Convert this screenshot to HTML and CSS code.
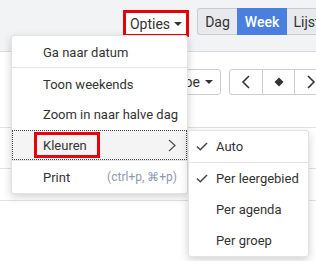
FILE: index.html
```html
<!DOCTYPE html>
<html>
<head>
<meta charset="utf-8">
<link rel="stylesheet" href="styles.css">
</head>
<body>
<div class="page">
  <div class="header">
    <button class="opties hl">Opties <span class="caret"></span></button>
    <div class="views">
      <span class="view">Dag</span>
      <span class="view active">Week</span>
      <span class="view">Lijst</span>
    </div>
  </div>
  <div class="toolbar">
    <button class="select">Voeg toe <span class="caret"></span></button>
    <div class="nav">
      <span class="navbtn"><svg width="10" height="14" viewBox="0 0 10 14"><path d="M8 1 L2 7 L8 13" fill="none" stroke="#333" stroke-width="1.6"/></svg></span>
      <span class="navbtn"><svg width="10" height="10" viewBox="0 0 10 10"><path d="M5 0.5 L9.5 5 L5 9.5 L0.5 5 Z" fill="#333"/></svg></span>
      <span class="navbtn"><svg width="10" height="14" viewBox="0 0 10 14"><path d="M2 1 L8 7 L2 13" fill="none" stroke="#333" stroke-width="1.6"/></svg></span>
    </div>
  </div>
  <div class="grid">
    <div class="row r1"></div>
    <div class="row r2"></div>
    <div class="row r3"></div>
  </div>

  <div class="menu">
    <div class="item">Ga naar datum</div>
    <div class="divider"></div>
    <div class="item">Toon weekends</div>
    <div class="item">Zoom in naar halve dag</div>
    <div class="item sub">
      <span class="label hl">Kleuren</span>
      <svg class="chev" width="8" height="13" viewBox="0 0 8 13"><path d="M1 1 L7 6.5 L1 12" fill="none" stroke="#555" stroke-width="1.3"/></svg>
    </div>
    <div class="divider"></div>
    <div class="item print">Print <span class="kbd">(ctrl+p, ⌘+p)</span></div>
  </div>

  <div class="submenu">
    <div class="sitem"><svg class="check" width="12" height="9" viewBox="0 0 12 9"><path d="M1 4.5 L4.3 7.8 L11 1" fill="none" stroke="#444" stroke-width="1.5"/></svg>Auto</div>
    <div class="divider"></div>
    <div class="sitem"><svg class="check" width="12" height="9" viewBox="0 0 12 9"><path d="M1 4.5 L4.3 7.8 L11 1" fill="none" stroke="#444" stroke-width="1.5"/></svg>Per leergebied</div>
    <div class="sitem"><span class="nocheck"></span>Per agenda</div>
    <div class="sitem"><span class="nocheck"></span>Per groep</div>
  </div>
</div>
</body>
</html>
```
FILE: styles.css
```css
* { box-sizing: border-box; }
html, body { margin: 0; padding: 0; }
body {
  font-family: Roboto, "Liberation Sans", sans-serif;
  color: #333;
  background: #fff;
  width: 316px;
  height: 261px;
  overflow: hidden;
}
.page { position: relative; width: 316px; height: 261px; overflow: hidden; }

.header {
  height: 52px;
  background: #f2f3f5;
  border-bottom: 1px solid #d9dbde;
  display: flex;
  align-items: flex-start;
  padding: 8px 0 0 123px;
  gap: 8px;
  white-space: nowrap;
}
.header > *, .toolbar > *, .views > *, .nav > * { flex-shrink: 0; }
.opties {
  margin-top: 2px;
  width: 66px;
  height: 27px;
  background: #fff;
  font: 14px Roboto, sans-serif;
  color: #333;
  padding: 0;
  display: flex;
  align-items: center;
  justify-content: center;
  gap: 4px;
}
.hl { border: 3px solid #e8000b; }
.caret {
  display: inline-block;
  width: 0; height: 0;
  border-left: 4px solid transparent;
  border-right: 4px solid transparent;
  border-top: 4px solid #333;
}
.views { display: flex; height: 27px; }
.view {
  display: flex; align-items: center; justify-content: center;
  height: 27px;
  font-size: 14px;
  background: #e7e9ec;
  border: 1px solid #c9ccd1;
  color: #333;
}
.view:first-child { width: 40px; border-radius: 3px 0 0 3px; border-right: none; }
.view.active { width: 50px; background: #4a7fdd; border-color: #4a7fdd; color: #fff; font-weight: 500; }
.view:last-child { width: 40px; border-left: none; }

.toolbar {
  display: flex;
  padding: 17px 0 0 131px;
  gap: 8px;
  height: 75px;
  white-space: nowrap;
}
.select {
  width: 90px; height: 26px;
  background: #fff;
  border: 1px solid #ccc;
  border-radius: 3px;
  font: 14px Roboto, sans-serif;
  color: #333;
  display: flex; align-items: center; justify-content: flex-end;
  gap: 5px;
  padding: 0 7px 0 0;
}
.nav { display: flex; height: 26px; }
.navbtn {
  height: 26px;
  display: flex; align-items: center; justify-content: center;
  border: 1px solid #ccc;
  background: #fff;
}
.navbtn:nth-child(1) { width: 34px; border-radius: 3px 0 0 3px; }
.navbtn:nth-child(2) { width: 32px; border-left: none; }
.navbtn:nth-child(3) { width: 32px; border-left: none; }

.grid .row { border-top: 1px solid #dfe1e4; }
.r1 { height: 41px; }
.r2 { height: 32px; }
.r3 { height: 60px; }

.menu {
  position: absolute;
  left: 11px; top: 35px;
  width: 177px;
  background: #fff;
  border: 1px solid #e3e3e3;
  border-radius: 3px;
  padding: 1px 0;
  box-shadow: 0 3px 8px rgba(0,0,0,0.18);
  font-size: 13px;
  white-space: nowrap;
}
.item {
  height: 30px;
  display: flex; align-items: center;
  padding-left: 31px;
}
.divider { height: 1px; background: #e5e5e5; margin-bottom: 1px; }
.item.sub {
  margin-top: 1px;
  background: #f4f4f4;
  border: 1px dotted #444;
  padding-left: 21px;
  justify-content: space-between;
  padding-right: 10px;
}
.item.sub .label {
  height: 26px;
  width: 66px;
  display: flex; align-items: center;
  padding-left: 6px;
  font-size: 13px;
}
.item.print { justify-content: space-between; padding-right: 10px; }
.kbd { color: #8d9aae; font-size: 12px; }

.submenu {
  position: absolute;
  left: 188px; top: 130px;
  width: 121px;
  background: #fff;
  border: 1px solid #e3e3e3;
  border-radius: 3px;
  box-shadow: 0 3px 8px rgba(0,0,0,0.18);
  font-size: 13px;
  white-space: nowrap;
}
.sitem {
  height: 31px;
  display: flex; align-items: center;
  padding-left: 7px;
}
.check { margin-right: 8px; }
.nocheck { display: inline-block; width: 12px; margin-right: 8px; }
.submenu .divider { margin-bottom: 0; }
```
